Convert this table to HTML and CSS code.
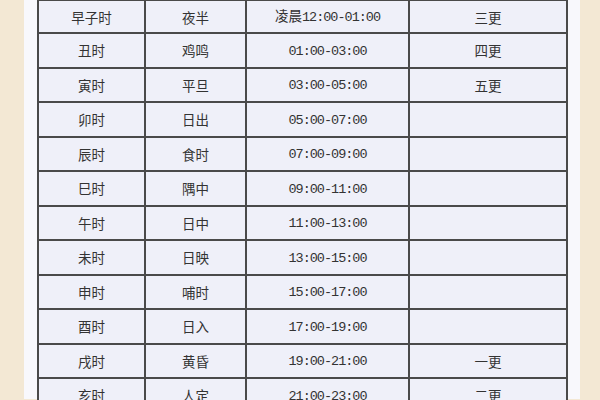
FILE: index.html
```html
<!DOCTYPE html>
<html lang="zh">
<head>
<meta charset="utf-8">
<title>十二时辰</title>
<link rel="stylesheet" href="styles.css">
</head>
<body>
<div class="panel">
<table class="hours">
<colgroup><col class="c1"><col class="c2"><col class="c3"><col class="c4"></colgroup>
<tbody>
<tr class="first"><td>早子时</td><td>夜半</td><td>凌晨<span class="num">12:00-01:00</span></td><td>三更</td></tr>
<tr><td>丑时</td><td>鸡鸣</td><td><span class="num">01:00-03:00</span></td><td>四更</td></tr>
<tr><td>寅时</td><td>平旦</td><td><span class="num">03:00-05:00</span></td><td>五更</td></tr>
<tr><td>卯时</td><td>日出</td><td><span class="num">05:00-07:00</span></td><td></td></tr>
<tr><td>辰时</td><td>食时</td><td><span class="num">07:00-09:00</span></td><td></td></tr>
<tr><td>巳时</td><td>隅中</td><td><span class="num">09:00-11:00</span></td><td></td></tr>
<tr><td>午时</td><td>日中</td><td><span class="num">11:00-13:00</span></td><td></td></tr>
<tr><td>未时</td><td>日映</td><td><span class="num">13:00-15:00</span></td><td></td></tr>
<tr><td>申时</td><td>哺时</td><td><span class="num">15:00-17:00</span></td><td></td></tr>
<tr><td>酉时</td><td>日入</td><td><span class="num">17:00-19:00</span></td><td></td></tr>
<tr><td>戌时</td><td>黄昏</td><td><span class="num">19:00-21:00</span></td><td>一更</td></tr>
<tr><td>亥时</td><td>人定</td><td><span class="num">21:00-23:00</span></td><td>二更</td></tr>
</tbody>
</table>
</div>
</body>
</html>
```

FILE: styles.css
```css
html, body {
  margin: 0;
  padding: 0;
  height: 100%;
  overflow: hidden;
}
body {
  background: #f3e8d4;
  font-family: "Noto Sans CJK SC", "Noto Sans", sans-serif;
  color: #333333;
}
.panel {
  margin: 0 20px 0 24px;
  padding: 0 14px 0 13px;
  height: 100%;
  background: #f8f8fc;
}
.hours {
  width: 529px;
  table-layout: fixed;
  border-collapse: separate;
  border-spacing: 0;
  border-top: 2px solid #4a4a4a;
  border-left: 2px solid #4a4a4a;
  margin-top: -1px;
  background: #eff0f9;
}
.c1 { width: 107px; }
.c2 { width: 101px; }
.c3 { width: 163px; }
.c4 { width: 158px; }
.hours td {
  border-right: 2px solid #4a4a4a;
  border-bottom: 2px solid #4a4a4a;
  height: 32.5px;
  padding: 0;
  text-align: center;
  vertical-align: middle;
  font-size: 13.5px;
  line-height: 16px;
}
.hours tr.first td {
  height: 31px;
}
.num {
  font-family: "Liberation Mono", "DejaVu Sans Mono", monospace;
  font-size: 13.5px;
  letter-spacing: -1px;
  color: #333333;
}
```
